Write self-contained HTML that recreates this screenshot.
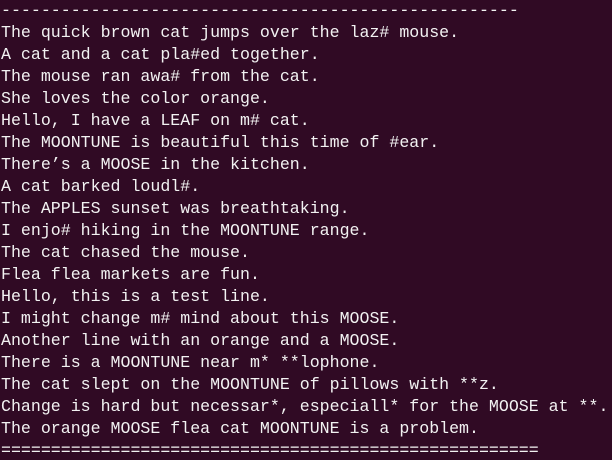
<!DOCTYPE html>
<html><head><meta charset="utf-8"><style>
html,body{margin:0;padding:0;background:#300a24;width:612px;height:460px;overflow:hidden}
pre{margin:0;padding:0 0 0 1px;color:#f2f2f2;font-family:"Liberation Mono",monospace;font-size:16.6px;line-height:22px;white-space:pre}
</style></head><body><pre>----------------------------------------------------
The quick brown cat jumps over the laz# mouse.
A cat and a cat pla#ed together.
The mouse ran awa# from the cat.
She loves the color orange.
Hello, I have a LEAF on m# cat.
The MOONTUNE is beautiful this time of #ear.
There’s a MOOSE in the kitchen.
A cat barked loudl#.
The APPLES sunset was breathtaking.
I enjo# hiking in the MOONTUNE range.
The cat chased the mouse.
Flea flea markets are fun.
Hello, this is a test line.
I might change m# mind about this MOOSE.
Another line with an orange and a MOOSE.
There is a MOONTUNE near m* **lophone.
The cat slept on the MOONTUNE of pillows with **z.
Change is hard but necessar*, especiall* for the MOOSE at **.
The orange MOOSE flea cat MOONTUNE is a problem.
======================================================</pre></body></html>
